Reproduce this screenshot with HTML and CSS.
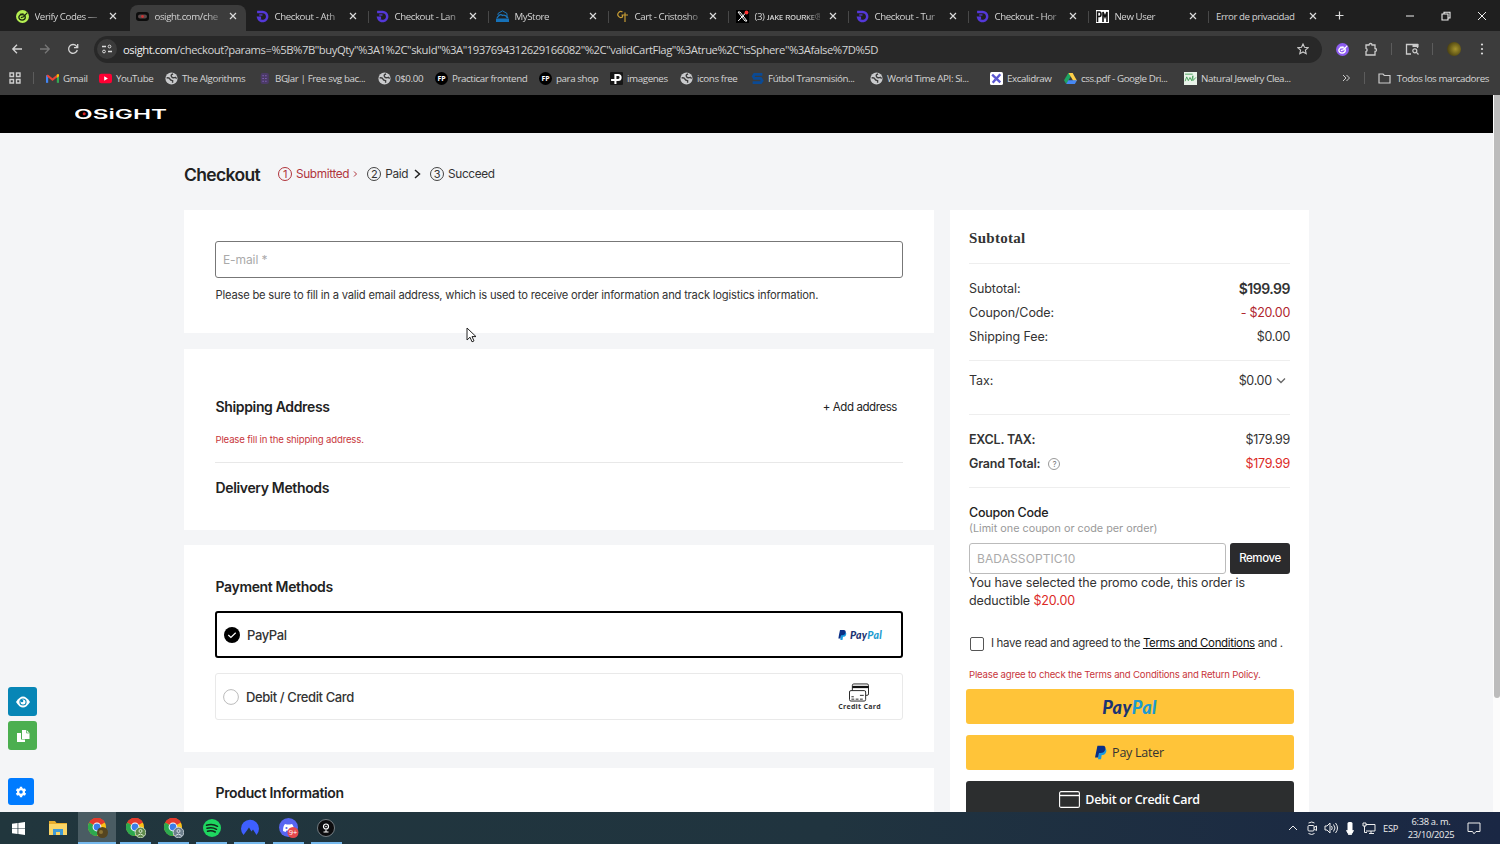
FILE: index.html
```html
<!DOCTYPE html>
<html lang="en">
<head>
    <meta charset="UTF-8">
    <meta name="viewport" content="width=device-width, initial-scale=1.0">
    <title>Osight Checkout</title>
    <link rel="stylesheet" href="styles.css">
</head>
<body>
    <!-- Shared icons -->
    <svg class="defs" width="0" height="0">
        <symbol id="i-close" viewBox="0 0 8 8"><path d="M1 1l6 6M7 1L1 7" stroke="#dcdcdc" stroke-width="1.2" fill="none"/></symbol>
        <symbol id="i-d" viewBox="0 0 12 12"><path d="M1 1.800h5.200a4.200 4.200 0 1 1-4.100 5.400h2.600" stroke="#5438d8" stroke-width="2.300" fill="none"/><path d="M3 4.600h3" stroke="#5438d8" stroke-width="1.200"/></symbol>
        <symbol id="i-globe" viewBox="0 0 12 12"><circle cx="6" cy="6" r="5.600" fill="#c9cacc"/><path d="M1.500 5.500q2.500-.5 3 1t2.500 1.500V10M7.500 1.800Q5 2.500 6 4.200t3.500.8L10.800 6" stroke="#3c3c3c" stroke-width="1.300" fill="none"/></symbol>
        <symbol id="i-pp" viewBox="0 0 12 14"><path d="M4 3h6.200c1.400 1 1.400 2.600.7 4C10 9 8.700 9.600 6.700 9.600L6 14H3z" fill="#1a9be0"/><path d="M2.500 0h5C10 0 11 1.700 10.300 4 9.600 6.400 8 7.500 5.500 7.500H4L3.100 12H0z" fill="#0a2f87"/></symbol>
        <symbol id="i-chrome" viewBox="0 0 20 20"><circle cx="9" cy="9" r="9" fill="#fbc116"/><path d="M9 9L1.200 4.500A9 9 0 0 1 16.800 4.500z" fill="#e33b2e"/><path d="M1.200 4.500A9 9 0 0 0 9 18l3-6-3-3z" fill="#2da94f"/><path d="M9 4.600h8a9 9 0 0 0-15.800 0z" fill="#e33b2e"/><circle cx="9" cy="9" r="4.400" fill="#fff"/><circle cx="9" cy="9" r="3.400" fill="#3b7de9"/></symbol>
        <symbol id="i-ufo" viewBox="0 0 12 12"><ellipse cx="5.600" cy="6.800" rx="3" ry="2.500" fill="none" stroke="currentColor" stroke-width="1.200"/><path d="M4.500 7l2.500-.8L10.500 2.500M3.500 4l3.500-.5" fill="none" stroke="currentColor" stroke-width="1.100"/></symbol>
    </svg>

    <!-- Tabs -->
    <div class="tabs">
        <div class="tab"><svg class="fav lime" viewBox="0 0 12 12"><use href="#i-ufo"/></svg><span>Verify Codes —</span><svg class="x"><use href="#i-close"/></svg></div>
        <div class="tab active"><svg class="fav" viewBox="0 0 13 13"><rect y="2" width="13" height="9" rx="3" fill="#0c0c0c"/><rect x="2" y="4.500" width="9" height="4" rx="2" fill="#59494a"/><circle cx="6.500" cy="6.500" r="1.400" fill="#c33"/></svg><span>osight.com/che</span><svg class="x"><use href="#i-close"/></svg></div>
        <div class="tab"><svg class="fav"><use href="#i-d"/></svg><span>Checkout - Ath</span><svg class="x"><use href="#i-close"/></svg></div>
        <div class="tab sep"><svg class="fav"><use href="#i-d"/></svg><span>Checkout - Lan</span><svg class="x"><use href="#i-close"/></svg></div>
        <div class="tab sep"><svg class="fav" viewBox="0 0 13 13"><path d="M2 5V3.500L6.500 .8 11 3.500V8" fill="none" stroke="#1c77bd"/><path d="M1 8q3-5 5.500-2.500Q9 4 12 8" fill="none" stroke="#1c77bd" stroke-width="1.300"/><path d="M0 8.500h13V12H0z" fill="#1671b8"/></svg><span>MyStore</span><svg class="x"><use href="#i-close"/></svg></div>
        <div class="tab sep"><svg class="fav" viewBox="0 0 13 13"><path d="M6.500 2A3 3 0 1 0 6.500 7V4.500M9 2.500V12M5.500 5H12" fill="none" stroke="#c79c34" stroke-width="1.200"/></svg><span>Cart - Cristosho</span><svg class="x"><use href="#i-close"/></svg></div>
        <div class="tab sep"><svg class="fav" viewBox="0 0 13 13"><path d="M0 0h13v13H0z" fill="#000"/><path d="M2 2h2l7 9H9zM10.500 2L2.200 11" fill="none" stroke="#fff"/><circle cx="10.500" cy="2.500" r="1.900" fill="#f33"/></svg><span>(3) ᴊᴀᴋᴇ ʀᴏᴜʀᴋᴇ®</span><svg class="x"><use href="#i-close"/></svg></div>
        <div class="tab sep"><svg class="fav"><use href="#i-d"/></svg><span>Checkout - Tur</span><svg class="x"><use href="#i-close"/></svg></div>
        <div class="tab sep"><svg class="fav"><use href="#i-d"/></svg><span>Checkout - Hor</span><svg class="x"><use href="#i-close"/></svg></div>
        <div class="tab sep"><svg class="fav" viewBox="0 0 13 13"><path d="M0 0h13v13H0z" fill="#fff"/><path d="M1.500 12V2h2q1.500 0 1.500 2.200T3.500 6.500h-2M7 12V2l2 5 2-5v10" fill="none" stroke="#111" stroke-width="1.600"/></svg><span>New User</span><svg class="x"><use href="#i-close"/></svg></div>
        <div class="tab sep"><span class="wide">Error de privacidad</span><svg class="x"><use href="#i-close"/></svg></div>
        <svg class="plus" viewBox="0 0 9 9"><path d="M4.500 .5v8M.5 4.500h8" stroke="#ddd" stroke-width="1.200"/></svg>
        <div class="win">
            <svg viewBox="0 0 10 10"><path d="M1 5h8" stroke="#eee"/></svg>
            <svg viewBox="0 0 10 10"><path d="M1 3h6v6H1zM3 3V1.200h6V7H7" fill="none" stroke="#eee" stroke-width="1.100"/></svg>
            <svg viewBox="0 0 10 10"><path d="M1 1l8 8M9 1L1 9" stroke="#eee"/></svg>
        </div>
    </div>

    <!-- Address bar -->
    <div class="toolbar">
        <div class="nav">
            <svg viewBox="0 0 12 12"><path d="M11 6H2M6 1.800L1.800 6 6 10.200" fill="none" stroke="#d5d5d5" stroke-width="1.300"/></svg>
            <svg viewBox="0 0 12 12"><path d="M1 6h9M6 1.800L10.200 6 6 10.200" fill="none" stroke="#777" stroke-width="1.300"/></svg>
            <svg viewBox="0 0 12 12"><path d="M10.300 7A4.400 4.400 0 1 1 9.500 3.200L10.500 4.400M10.700 1v3.600H7" fill="none" stroke="#d5d5d5" stroke-width="1.300"/></svg>
        </div>
        <div class="url">
            <i class="tune"><svg viewBox="0 0 12 12"><path d="M1 3.500h4M7 8.500h4" stroke="#ddd" stroke-width="1.300"/><circle cx="8.500" cy="3.500" r="1.400" fill="none" stroke="#ddd"/><circle cx="3" cy="8.500" r="1.400" fill="none" stroke="#ddd"/></svg></i>
            <span><b>osight.com</b>/checkout?params=%5B%7B"buyQty"%3A1%2C"skuId"%3A"1937694312629166082"%2C"validCartFlag"%3Atrue%2C"isSphere"%3Afalse%7D%5D</span>
            <svg class="star" viewBox="0 0 12 12"><path d="M6 1l1.500 3.300 3.600.4-2.700 2.400.8 3.600L6 8.900l-3.200 1.800.8-3.600L.9 4.700l3.600-.4z" fill="none" stroke="#ccc" stroke-width="1.100"/></svg>
        </div>
        <div class="exts">
            <svg class="fav violet" viewBox="0 0 12 12"><use href="#i-ufo"/></svg>
            <svg class="puzzle" viewBox="0 0 14 14"><path d="M2 3h3a1.500 1.500 0 0 1 3 0h3v3.500a1.500 1.500 0 0 1 0 3V13H2v-3.500a1.700 1.700 0 0 0 0-3.200z" fill="none" stroke="#ccc" stroke-width="1.300"/></svg>
            <i class="bar"></i>
            <svg class="lens" viewBox="0 0 14 12"><path d="M6 11H1.500V1.500h11V5" fill="none" stroke="#ccc" stroke-width="1.300"/><path d="M7.500 1h6v3h-6z" fill="#ccc"/><circle cx="9.800" cy="7.800" r="2" fill="none" stroke="#ccc" stroke-width="1.200"/><path d="M11.200 9.200L13.500 11.500" stroke="#ccc" stroke-width="1.200"/></svg>
            <i class="bar"></i>
            <i class="avatar"></i>
            <svg class="dots" viewBox="0 0 4 12"><g fill="#ddd"><circle cx="2" cy="1.500" r="1.100"/><circle cx="2" cy="6" r="1.100"/><circle cx="2" cy="10.500" r="1.100"/></g></svg>
        </div>
    </div>

    <!-- Bookmarks -->
    <div class="bookmarks">
        <svg class="apps" viewBox="0 0 12 12"><path d="M1 1h3.500v3.500H1zM7.500 1H11v3.500H7.500zM1 7.500h3.500V11H1zM7.500 7.500H11V11H7.500z" fill="none" stroke="#ccc" stroke-width="1.400"/></svg>
        <i class="bar"></i>
        <div class="marks">
            <a><svg viewBox="0 0 12 12"><path d="M1 10V3" stroke="#4285f4" stroke-width="2"/><path d="M11 10V3" stroke="#34a853" stroke-width="2"/><path d="M1 3l5 4 5-4" fill="none" stroke="#ea4335" stroke-width="2"/><path d="M10 2l2 0v2l-2 1.500z" fill="#fbbc04"/></svg>Gmail</a>
            <a><svg viewBox="0 0 12 12"><rect y="1.700" width="12" height="8.600" rx="2" fill="#f03"/><path d="M4.800 4v4L8.200 6z" fill="#fff"/></svg>YouTube</a>
            <a><svg><use href="#i-globe"/></svg>The Algorithms</a>
            <a><svg viewBox="0 0 12 12"><rect x="2.500" y="1" width="7.500" height="10" rx="1.500" fill="#4b3a66"/><path d="M4 3.500h4M4 6h4M4 8.500h4" stroke="#7d5fb0" stroke-dasharray="1.500 1"/></svg>BGJar | Free svg bac...</a>
            <a><svg><use href="#i-globe"/></svg>0$0.00</a>
            <a><i class="fp">FP</i>Practicar frontend</a>
            <a><i class="fp">FP</i>para shop</a>
            <a><svg viewBox="0 0 12 12"><rect width="12" height="12" rx="1" fill="#161616"/><path d="M5 11V2.800h2.500a2.200 2.200 0 0 1 0 4.600H1" fill="none" stroke="#fff" stroke-width="1.900"/></svg>imagenes</a>
            <a><svg><use href="#i-globe"/></svg>icons free</a>
            <a><svg viewBox="0 0 12 12"><path d="M10.500 2.200H3.200L2 4l1 1.800h6L10.300 8 9 9.800H1.500" fill="none" stroke="#0b4a94" stroke-width="2.500"/></svg>Fútbol Transmisión...</a>
            <a><svg><use href="#i-globe"/></svg>World Time API: Si...</a>
            <a><svg viewBox="0 0 12 12"><rect width="12" height="12" rx="1.500" fill="#fff"/><path d="M2 2.500l7.500 7M9.500 2L6 6M5 7L2.500 10" stroke="#5b57d1" stroke-width="2.200"/></svg>Excalidraw</a>
            <a><svg viewBox="0 0 12 12"><path d="M4 1h4L4 8l-2 3-2-3.500z" fill="#1da462"/><path d="M8 1L4.200 1 8.500 8H12z" fill="#ffcf48"/><path d="M4 7.500h8L10 11H2z" fill="#4688f4"/></svg>css.pdf - Google Dri...</a>
            <a><svg viewBox="0 0 12 12"><path d="M0 0h12v12H0z" fill="#e9f3e9"/><path d="M1 2h7M1 8.500l1.500-4L4 8l1.500-3L7 8l1.200-4.500V8L11 5" fill="none" stroke="#3c9a50" stroke-width=".8"/></svg>Natural Jewelry Clea...</a>
        </div>
        <svg class="more" viewBox="0 0 8 8"><path d="M1 1l3 3-3 3M4.500 1l3 3-3 3" fill="none" stroke="#ccc"/></svg>
        <i class="bar"></i>
        <a class="all"><svg viewBox="0 0 13 11"><path d="M1 1h4l1.300 1.500H12V10H1z" fill="none" stroke="#ccc" stroke-width="1.200"/></svg>Todos los marcadores</a>
    </div>

    <!-- Site -->
    <div class="page">
        <header>
            <svg width="94" height="14" viewBox="0 0 94 14"><text class="brand" x="-1" y="11.500" textLength="93" lengthAdjust="spacingAndGlyphs">OSiGHT</text><circle cx="9.200" cy="6.700" r="1.500" fill="#d22"/></svg>
        </header>

        <div class="steps">
            <h1>Checkout</h1>
            <span class="step red"><i>1</i>Submitted <svg class="thin" viewBox="0 0 5 8"><path d="M1 1.500l2.500 2.500L1 6.500" fill="none" stroke="#b0343c"/></svg></span>
            <span class="step"><i>2</i>Paid <svg viewBox="0 0 7 10"><path d="M1 1l4.500 4L1 9" fill="none" stroke="#222" stroke-width="1.500"/></svg></span>
            <span class="step"><i>3</i>Succeed</span>
        </div>

        <div class="columns">
            <div class="left">
                <section class="card email">
                    <div class="input">E-mail *</div>
                    <p>Please be sure to fill in a valid email address, which is used to receive order information and track logistics information.</p>
                </section>

                <section class="card address">
                    <div class="head"><h2>Shipping Address</h2><a>+ Add address</a></div>
                    <p class="error">Please fill in the shipping address.</p>
                    <h2 class="delivery">Delivery Methods</h2>
                </section>

                <section class="card payment">
                    <h2>Payment Methods</h2>
                    <div class="method selected">
                        <svg class="radio" viewBox="0 0 16 16"><circle cx="8" cy="8" r="8" fill="#000"/><path d="M4.300 8l2.600 2.500 4.800-4.700" fill="none" stroke="#fff" stroke-width="1.200"/></svg>
                        <b>PayPal</b>
                        <span class="pp small"><svg viewBox="0 0 12 14"><use href="#i-pp"/></svg><em>Pay</em><em class="sky">Pal</em></span>
                    </div>
                    <div class="method">
                        <svg class="radio" viewBox="0 0 16 16"><circle cx="8" cy="8" r="7.400" fill="#fff" stroke="#bbb"/></svg>
                        <b>Debit / Credit Card</b>
                        <span class="cc">
                            <svg viewBox="0 0 22 20"><rect x="4" y="1" width="17" height="12" rx="1.500" fill="#fff" stroke="#222"/><path d="M4 4.200h17" stroke="#111" stroke-width="2.400"/><rect x="1" y="8" width="17" height="11" rx="1.500" fill="#fff" stroke="#222"/><path d="M3 14.500h2.500M12 13h4M3 17h3M7.500 17h3M12 17h3" stroke="#222"/></svg>
                            Credit Card
                        </span>
                    </div>
                </section>

                <section class="card product"><h2>Product Information</h2></section>
            </div>

            <aside class="card summary">
                <h3>Subtotal</h3>
                <div class="group totals">
                    <div><span>Subtotal:</span><b class="big">$199.99</b></div>
                    <div><span>Coupon/Code:</span><span class="sum crimson">- $20.00</span></div>
                    <div><span>Shipping Fee:</span><span class="sum">$0.00</span></div>
                </div>
                <div class="group tax">
                    <div><span>Tax:</span><span class="sum">$0.00 <svg viewBox="0 0 10 8"><path d="M1 1.500l4 4 4-4" fill="none" stroke="#666" stroke-width="1.300"/></svg></span></div>
                </div>
                <div class="group grand">
                    <div><b>EXCL. TAX:</b><span class="sum">$179.99</span></div>
                    <div><b>Grand Total: <i class="help">?</i></b><span class="sum red">$179.99</span></div>
                </div>
                <div class="coupon">
                    <b>Coupon Code</b>
                    <small>(Limit one coupon or code per order)</small>
                    <div class="code"><div class="field">BADASSOPTIC10</div><div class="remove">Remove</div></div>
                    <p>You have selected the promo code, this order is<br>deductible <span class="red">$20.00</span></p>
                </div>
                <div class="agree"><i></i><span>I have read and agreed to the <u>Terms and Conditions</u> and .</span></div>
                <p class="error">Please agree to check the Terms and Conditions and Return Policy.</p>
                <div class="pay"><span class="pp"><em>Pay</em><em class="sky">Pal</em></span></div>
                <div class="pay later"><svg viewBox="0 0 12 14"><use href="#i-pp"/></svg>Pay Later</div>
                <div class="pay dark"><svg viewBox="0 0 21 17"><rect x=".6" y=".6" width="19.800" height="15.800" rx="1.500" fill="none" stroke="#fff" stroke-width="1.100"/><path d="M1 4.500h19" stroke="#fff" stroke-width="1.400"/></svg>Debit or Credit Card</div>
            </aside>
        </div>

        <!-- Floating tools -->
        <div class="tools">
            <div class="tool eye"><svg viewBox="0 0 16 12"><path d="M1 6q7-11 14 0-7 11-14 0z" fill="#fff"/><circle cx="8" cy="6" r="3.600" fill="#0786b6"/><circle cx="8" cy="6" r="2.500" fill="#fff"/><circle cx="7" cy="5" r="1.300" fill="#0786b6"/></svg></div>
            <div class="tool copy"><svg viewBox="0 0 14 14"><path d="M1 4h4v6.500h4V13H1z" fill="#fff"/><path d="M6 1h4.500L13.500 4v6H6z" fill="#fff"/><path d="M10.500 1v3h3" fill="none" stroke="#4caf50" stroke-width=".7"/></svg></div>
            <div class="tool gear"><svg viewBox="0 0 12 12"><circle cx="6" cy="6" r="2.900" fill="none" stroke="#fff" stroke-width="2.200"/><path d="M6 .8v2M6 9.200v2M1.500 3.400l1.700 1M8.800 7.600l1.700 1M1.500 8.600l1.700-1M8.800 4.400l1.700-1" stroke="#fff" stroke-width="2.400"/></svg></div>
        </div>
        <div class="scroll"><i></i></div>
        <svg class="cursor" viewBox="0 0 11 16"><path d="M1 1v12l3-2.800 2 4.600 2-.9-2-4.300h4z" fill="#fff" stroke="#222"/></svg>
    </div>

    <!-- Taskbar -->
    <div class="taskbar">
        <div class="task plain"><svg viewBox="0 0 14 14"><path d="M0 2l6-.9v5.500H0zM6.800 1L14 0v6.600H6.800zM0 7.400h6v5.500L0 12zM6.800 7.400H14V14l-7.200-1z" fill="#fff"/></svg></div>
        <div class="task plain"><svg class="l" viewBox="0 0 18 16"><path d="M0 1h6l1.500 2H18v12H0z" fill="#e8ad2d"/><path d="M0 4h18v11H0z" fill="#fbd667"/><path d="M4 15V9h10v6h-3v-3H7v3z" fill="#3f9ad6"/></svg></div>
        <div class="task on"><svg class="xl" viewBox="0 0 20 20"><use href="#i-chrome"/><circle cx="14.500" cy="14.500" r="5.500" fill="#55451f"/><circle cx="13" cy="14" r="2" fill="#8c7433"/></svg></div>
        <div class="task"><svg class="xl" viewBox="0 0 20 20"><use href="#i-chrome"/><circle cx="14.500" cy="14.500" r="5.300" fill="#5f8a4b" stroke="#d7e8cf" stroke-width=".8"/><circle cx="14.500" cy="13" r="1.500" fill="none" stroke="#d7e8cf"/><path d="M11.500 17.500q3-3 6 0" fill="none" stroke="#d7e8cf"/></svg></div>
        <div class="task"><svg class="xl" viewBox="0 0 20 20"><use href="#i-chrome"/><circle cx="14.500" cy="14.500" r="5.300" fill="#6d7f8c" stroke="#d5dde4" stroke-width=".8"/><circle cx="14.500" cy="13" r="1.500" fill="none" stroke="#d5dde4"/><path d="M11.500 17.500q3-3 6 0" fill="none" stroke="#d5dde4"/></svg></div>
        <div class="task"><svg class="l" viewBox="0 0 18 18"><circle cx="9" cy="9" r="9" fill="#1ed760"/><path d="M3.500 6.300q6-1.800 11 1M4 9.300q5-1.500 9.500 1M4.500 12.200q4-1.200 7.800.8" fill="none" stroke="#10281a" stroke-width="1.500" stroke-linecap="round"/></svg></div>
        <div class="task"><svg class="l" viewBox="0 0 18 18"><path d="M2.500 16A9 9 0 1 1 15.500 16L12 10.500l-1.500 2L8 8.500l-2.300 3.200z" fill="#3e5fff"/></svg></div>
        <div class="task"><svg class="xl" viewBox="0 0 20 20"><circle cx="9.500" cy="9.500" r="9.500" fill="#5865f2"/><path d="M4 13q0-5 2-7l2 .5h3L13 6q2 2 2 7l-2.500 1-1-1.500h-4l-1 1.500z" fill="#fff"/><circle cx="7.500" cy="10" r="1.100" fill="#5865f2"/><circle cx="14" cy="14.500" r="5.500" fill="#e5484d"/><text x="14" y="17.200" font-size="7.500" fill="#fff" text-anchor="middle">9+</text></svg></div>
        <div class="task"><svg class="l" viewBox="0 0 18 18"><circle cx="9" cy="9" r="8.500" fill="#0c0c0e" stroke="#8d9499" stroke-width=".8"/><circle cx="9" cy="7.500" r="2.500" fill="none" stroke="#fff" stroke-width="1.200"/><circle cx="9" cy="7.500" r=".8" fill="#fff"/><path d="M9 10.500v2.500M6.500 13h5" stroke="#fff"/></svg></div>
        <div class="tray">
            <svg class="up" viewBox="0 0 10 8"><path d="M1 6l4-4 4 4" fill="none" stroke="#eee"/></svg>
            <svg viewBox="0 0 14 14"><rect x="3" y="4.500" width="6" height="5.500" rx="1" fill="none" stroke="#eee"/><path d="M9 6.500l2.500-1.500v4.500L9 8M3.500 2q3.500-2 6 0M3.500 12.500q3.500 2 6 0" fill="none" stroke="#eee"/></svg>
            <svg viewBox="0 0 14 14"><path d="M1 5h2l3-3v10L3 9H1zM7.500 5q1.500 2 0 4M9.500 3.500q3 3.500 0 7M11.500 2q4 5 0 10" fill="none" stroke="#eee"/></svg>
            <svg viewBox="0 0 14 14"><rect x="4.500" y="1" width="5" height="9" rx="1.500" fill="#fff"/><path d="M3.500 9.500h7L9 12.500H5zM7 12v2M5 13.500h4" fill="#fff" stroke="#fff" stroke-width=".8"/></svg>
            <svg viewBox="0 0 14 14"><path d="M4 3.500h9v6.500H4M7 12.500h5M9 10v2.500M1 2h3v3H1zM2.500 5v6.500H5" fill="none" stroke="#eee"/></svg>
            <span class="lang">ESP</span>
            <span class="clock">6:38 a. m.<br>23/10/2025</span>
            <svg class="note" viewBox="0 0 14 14"><path d="M1 2h12v8.500H9L7 12.800 5.500 10.500H1z" fill="none" stroke="#eee"/></svg>
        </div>
    </div>
</body>
</html>
```
FILE: styles.css
```css
* {
    box-sizing: border-box;
}
body {
    margin: 0;
    width: 1500px;
    height: 844px;
    overflow: hidden;
    display: flex;
    flex-direction: column;
    background: #3c3c3c;
    font-family: "Open Sans", "Noto Sans", sans-serif;
    font-size: 10.4px;
    color: #d4d4d4;
}
svg {
    display: block;
    flex: none;
}
.defs {
    position: absolute;
}
h1, h2, h3, p {
    margin: 0;
}
i, em {
    font-style: normal;
}

/* Tabs */
.tabs {
    flex: none;
    display: flex;
    align-items: center;
    height: 31px;
    padding-left: 8px;
    background: #1f1f1f;
}
.tab {
    flex: none;
    display: flex;
    align-items: center;
    width: 120px;
    height: 31px;
    padding: 1px 11px 0 8px;
    font-size: 9.700px;
    letter-spacing: -0.42px;
}
.tab.sep {
    background: linear-gradient(#484848, #484848) left 60% / 1px 12px no-repeat;
}
.tab.active {
    height: 26px;
    margin: 5px 2px 0 2px;
    width: 116px;
    padding: 0 9px 4px 6px;
    border-radius: 8px 8px 0 0;
    background: #3c3c3c;
}
.tab span {
    width: 65px;
    white-space: nowrap;
    margin-right: auto;
    -webkit-mask: linear-gradient(90deg, #000 78%, rgba(0, 0, 0, 0.3));
    mask: linear-gradient(90deg, #000 78%, rgba(0, 0, 0, 0.3));
}
.tab span.wide {
    width: 86px;
    -webkit-mask: none;
    mask: none;
}
.fav {
    width: 13px;
    height: 13px;
    margin-right: 5.500px;
}
.lime {
    border-radius: 50%;
    background: #b5f052;
    color: #1c2a10;
}
.violet {
    border-radius: 50%;
    background: #8d5cf0;
    color: #fff;
}
.x {
    width: 8px;
    height: 8px;
}
.plus {
    width: 9px;
    height: 9px;
    margin-left: 7px;
}
.win {
    display: flex;
    gap: 26px;
    margin-left: auto;
    margin-right: 13px;
}
.win svg {
    width: 10px;
    height: 10px;
}

/* Address bar */
.toolbar {
    flex: none;
    display: flex;
    align-items: center;
    height: 36px;
}
.nav {
    display: flex;
    gap: 16px;
    width: 94px;
    padding-left: 11px;
}
.nav svg {
    width: 12px;
    height: 12px;
}
.url {
    display: flex;
    align-items: center;
    width: 1228px;
    height: 27px;
    padding: 0 13px 0 3px;
    border-radius: 14px;
    background: #282828;
    font-size: 11.300px;
    letter-spacing: -0.465px;
    white-space: nowrap;
}
.url b {
    font-weight: 400;
    color: #f0f0f0;
}
.tune {
    display: grid;
    place-items: center;
    width: 20px;
    height: 20px;
    margin-right: 6px;
    border-radius: 50%;
    background: #3b3b3b;
}
.tune svg, .star {
    width: 12px;
    height: 12px;
}
.star {
    margin-left: auto;
}
.exts {
    display: flex;
    align-items: center;
    padding-left: 14px;
}
.exts .fav {
    margin-right: 15px;
}
.puzzle {
    width: 14px;
    height: 14px;
}
.bar {
    width: 1px;
    height: 12px;
    background: #5c5c5c;
}
.exts .bar {
    margin: 0 13px;
}
.lens {
    width: 14px;
    height: 12px;
}
.avatar {
    width: 14px;
    height: 14px;
    margin-left: 1px;
    border-radius: 50%;
    background: radial-gradient(circle at 60% 50%, #a5932c, #5d5215 60%, #2c2518);
}
.dots {
    width: 4px;
    height: 12px;
    margin-left: 19px;
}

/* Bookmarks */
.bookmarks {
    flex: none;
    display: flex;
    align-items: center;
    height: 28px;
    padding: 0 11px 6px 9px;
}
.apps {
    width: 12px;
    height: 12px;
    margin-right: 12px;
}
.marks {
    display: grid;
    grid-template-columns: 53px 66px 93px 120px 57px 104px 71px 70px 71px 119px 120px 74px 120px 110px;
    margin-left: 12px;
}
.bookmarks a {
    display: flex;
    align-items: center;
    gap: 4px;
    font-size: 9.800px;
    letter-spacing: -0.42px;
    white-space: nowrap;
}
.bookmarks a svg {
    width: 13px;
    height: 13px;
}
.fp {
    width: 13px;
    height: 13px;
    border-radius: 50%;
    background: #000;
    color: #fff;
    font-size: 7px;
    font-weight: 700;
    line-height: 13px;
    letter-spacing: 0;
    text-align: center;
}
.more {
    width: 8px;
    height: 8px;
    margin-left: auto;
    margin-right: 14px;
}
.bookmarks .all {
    margin-left: 13px;
    gap: 6px;
}

/* Site */
.page {
    position: relative;
    flex: 1;
    min-height: 0;
    overflow: hidden;
    background: #f4f5f7;
    font-family: Inter, sans-serif;
    color: #333;
}
header {
    height: 38px;
    padding: 12px 0 0 75px;
    background: #000;
}
.brand {
    font-family: Inter, sans-serif;
    font-size: 13.500px;
    font-weight: 600;
    fill: #fff;
}
.steps {
    display: flex;
    align-items: center;
    height: 77px;
    padding: 5px 0 0 184px;
}
.steps h1 {
    width: 94px;
    font-size: 17.500px;
    font-weight: 600;
    letter-spacing: -0.65px;
    color: #222;
}
.step {
    display: flex;
    align-items: center;
    font-size: 11.800px;
    letter-spacing: -0.35px;
    margin-right: 9px;
}
.step i {
    display: grid;
    place-items: center;
    width: 14px;
    height: 14px;
    margin-right: 4px;
    border: 1px solid #444;
    border-radius: 50%;
    font-size: 11px;
    line-height: 12px;
}
.step svg {
    width: 7px;
    height: 10px;
    margin-left: 6px;
}
.step svg.thin {
    width: 5px;
    height: 8px;
    margin-left: 4px;
}
.step.red {
    color: #b0343c;
}
.step.red i {
    border-color: #b0343c;
}
.columns {
    display: flex;
    align-items: flex-start;
    gap: 16px;
    padding-left: 184px;
}
.left {
    display: flex;
    flex-direction: column;
    gap: 15.500px;
    width: 750px;
}
.card {
    background: #fff;
    padding: 0 31px;
}
h2 {
    font-size: 14px;
    font-weight: 600;
    line-height: 20px;
    letter-spacing: -0.35px;
    color: #222;
}
.left h2 {
    padding-left: 0.500px;
}
.email {
    height: 123px;
    padding-top: 31px;
}
.input {
    height: 37px;
    padding-left: 7px;
    border: 1px solid #777;
    border-radius: 3px;
    font-size: 12px;
    letter-spacing: -0.1px;
    line-height: 36px;
    color: #aaa;
}
.email p {
    margin-top: 9px;
    padding-left: 0.500px;
    font-size: 11.200px;
    letter-spacing: -0.2px;
    line-height: 16px;
    white-space: nowrap;
}
.address {
    height: 181px;
    padding-top: 48px;
}
.head {
    display: flex;
    justify-content: space-between;
    align-items: center;
    padding-right: 6px;
}
.head a {
    font-size: 11.500px;
    letter-spacing: -0.42px;
    line-height: 16px;
    color: #222;
}
.error {
    font-size: 9.600px;
    letter-spacing: -0.17px;
    color: #c8363c;
    white-space: nowrap;
}
.address .error {
    height: 46px;
    padding-top: 17px;
    padding-left: 0.500px;
    border-bottom: 1px solid #e8e8e8;
}
.delivery {
    margin-top: 15px;
}
.payment {
    height: 207px;
    padding-top: 31px;
}
.payment h2 {
    line-height: 21px;
}
.method {
    display: flex;
    align-items: center;
    height: 47px;
    margin-top: 15px;
    padding: 0 21px 0 7px;
    border: 1px solid #e9e9e9;
    border-radius: 3px;
    font-size: 13px;
    letter-spacing: -0.4px;
}
.method.selected {
    border: 2px solid #000;
    margin-top: 14px;
    padding: 0 19px 0 7px;
}
.method b {
    font-weight: 500;
    margin: 1px auto 0 7px;
}
.radio {
    width: 16px;
    height: 16px;
}
.pp {
    display: flex;
    align-items: center;
    font-family: Lato, sans-serif;
    font-size: 18px;
    font-weight: 900;
    letter-spacing: 0.4px;
    color: #1b3372;
}
.pp em {
    font-style: italic;
}
.pp .sky {
    color: #1e9bd0;
}
.pp.small {
    font-size: 10.500px;
    letter-spacing: 0.250px;
}
.pp svg {
    width: 9px;
    height: 10px;
    margin-right: 3px;
}
.cc {
    display: flex;
    flex-direction: column;
    align-items: center;
    font-family: "Open Sans", sans-serif;
    font-size: 7px;
    font-weight: 700;
    line-height: 8px;
    letter-spacing: 0.300px;
}
.cc svg {
    width: 22px;
    height: 19px;
    margin: 0 2px 1px 0;
}
.product {
    height: 90px;
    padding-top: 15px;
}

/* Order summary */
.summary {
    width: 359px;
    height: 640px;
    padding: 0 19px;
    font-size: 12.500px;
    letter-spacing: -0.1px;
}
.summary h3 {
    height: 54px;
    padding-top: 18px;
    border-bottom: 1px solid #eee;
    font-family: "Liberation Serif", serif;
    font-size: 15px;
    line-height: 20px;
    letter-spacing: 0.3px;
}
.group {
    border-bottom: 1px solid #eee;
}
.group > div {
    display: flex;
    justify-content: space-between;
    align-items: center;
    height: 24px;
}
.group b {
    font-weight: 600;
    letter-spacing: -0.2px;
}
.group .big {
    font-size: 14px;
    letter-spacing: -0.5px;
}
.sum {
    letter-spacing: -0.3px;
}
.totals {
    height: 97px;
    padding-top: 12px;
}
.tax {
    height: 54px;
    padding-top: 7px;
}
.tax svg {
    display: inline-block;
    width: 10px;
    height: 8px;
    margin: 0 4px 0 1px;
}
.grand {
    height: 73px;
    padding-top: 12px;
}
.help {
    display: inline-grid;
    place-items: center;
    width: 12px;
    height: 12px;
    margin-left: 5px;
    border: 1px solid #999;
    border-radius: 50%;
    font-size: 8px;
    font-weight: 400;
    color: #777;
    vertical-align: 1px;
}
.crimson {
    color: #b0262e;
}
.summary .red {
    color: #dc2a26;
}
.coupon {
    padding-top: 16px;
}
.coupon b {
    display: block;
    font-weight: 500;
    line-height: 18px;
    letter-spacing: -0.25px;
    color: #222;
}
.coupon small {
    display: block;
    font-size: 10.800px;
    line-height: 14px;
    color: #999;
    letter-spacing: 0;
}
.code {
    display: flex;
    gap: 4px;
    height: 31px;
    margin-top: 7px;
}
.field {
    width: 257px;
    padding-left: 7px;
    border: 1px solid #bbb;
    border-radius: 3px;
    font-size: 12px;
    line-height: 30px;
    letter-spacing: 0.1px;
    color: #aaa;
}
.remove {
    flex: 1;
    border-radius: 3px;
    background: #2b2b2d;
    color: #fff;
    font-size: 11.500px;
    font-weight: 500;
    line-height: 31px;
    letter-spacing: -0.4px;
    text-align: center;
}
.coupon p {
    line-height: 17.500px;
    letter-spacing: -0.12px;
    white-space: nowrap;
}
.agree {
    display: flex;
    align-items: center;
    height: 20px;
    margin-top: 24.500px;
    font-size: 11.500px;
    letter-spacing: -0.35px;
    white-space: nowrap;
}
.agree span {
    margin-top: -1px;
}
.agree i {
    flex: none;
    width: 14px;
    height: 14px;
    margin-right: 7px;
    margin-left: 1px;
    border: 1.500px solid #555;
    border-radius: 2px;
}
.agree u {
    color: #111;
}
.summary .error {
    height: 35.500px;
    padding-top: 15.500px;
    letter-spacing: -0.19px;
}
.pay {
    display: flex;
    justify-content: center;
    align-items: center;
    height: 35px;
    margin: 0 -3.500px 11px;
    border-radius: 3px;
    background: #ffc439;
}
.later, .dark {
    font-family: "Open Sans", sans-serif;
    font-size: 12.500px;
    font-weight: 500;
    letter-spacing: -0.25px;
}
.later svg {
    width: 12px;
    height: 15px;
    margin-right: 5px;
}
.dark {
    padding-top: 1px;
    background: #2c2e2f;
    color: #fff;
    font-weight: 600;
    letter-spacing: -0.3px;
}
.dark svg {
    width: 21px;
    height: 17px;
    margin-right: 5px;
}

/* Things floating over the site */
.tools {
    position: absolute;
    left: 8px;
    top: 592px;
}
.tool {
    display: grid;
    place-items: center;
    width: 29px;
    height: 29px;
    margin-bottom: 5px;
    border-radius: 3px;
}
.tool svg {
    width: 16px;
    height: 14px;
}
.eye {
    background: #0786b6;
}
.copy {
    background: #4caf50;
}
.gear {
    width: 26px;
    height: 27px;
    margin-top: 28px;
    background: #007bff;
}
.tool.gear svg {
    width: 12px;
    height: 12px;
}
.scroll {
    position: absolute;
    right: 0;
    top: 0;
    width: 7px;
    height: 100%;
    background: #fcfcfc;
}
.scroll i {
    display: block;
    width: 6px;
    height: 603px;
    margin-left: 1px;
    border-radius: 0 0 3px 3px;
    background: #bcbcbc;
}
.cursor {
    position: absolute;
    left: 466px;
    top: 232px;
    width: 11px;
    height: 16px;
}

/* Taskbar */
.taskbar {
    flex: none;
    display: flex;
    height: 32px;
    background: linear-gradient(90deg, #21363d, #20343f 55%, #1a2744);
    color: #eee;
}
.task {
    display: grid;
    place-items: center;
    width: 38.200px;
    background: linear-gradient(#76b9ed, #76b9ed) center bottom / 31px 2px no-repeat;
}
.task.plain {
    width: 39px;
    padding-right: 2px;
    background: none;
}
.task.on {
    background: linear-gradient(#76b9ed, #76b9ed) center bottom / 38px 2px no-repeat, #4a5c63;
}
.task svg {
    width: 13px;
    height: 13px;
}
.task svg.l {
    width: 18px;
    height: 18px;
}
.task svg.xl {
    width: 20px;
    height: 20px;
    margin-left: 2px;
}
.tray {
    display: flex;
    align-items: center;
    margin-left: auto;
    padding-right: 19px;
}
.tray svg {
    width: 14px;
    height: 14px;
    margin-right: 5px;
}
.tray .up {
    width: 10px;
    height: 8px;
    margin-right: 7px;
}
.lang {
    width: 23px;
    margin-left: 2px;
    font-size: 9.300px;
    letter-spacing: -0.2px;
}
.clock {
    width: 50px;
    margin-right: 11px;
    font-size: 9.300px;
    line-height: 13.500px;
    letter-spacing: -0.3px;
    text-align: center;
    white-space: nowrap;
}
.tray .note {
    margin-right: 0;
}
```
